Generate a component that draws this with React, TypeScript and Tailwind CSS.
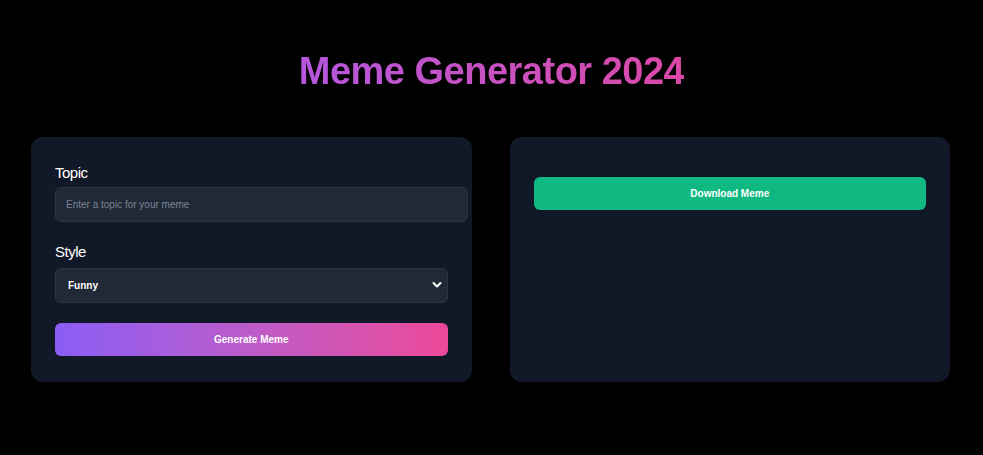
import { useState } from 'react';

export default function App() {
  const [topic, setTopic] = useState('');
  const [style, setStyle] = useState('funny');

  return (
    <div className="min-h-screen w-full bg-black font-['Liberation_Sans',Arial,sans-serif] text-white">
      <div className="flex justify-center pt-[49px] pb-[44px]">
        <h1 className="bg-gradient-to-r from-[#b456dc] to-[#db47a6] bg-clip-text text-[38px] font-bold leading-[44px] tracking-[-0.5px] text-transparent">
          Meme Generator 2024
        </h1>
      </div>

      <div className="grid grid-cols-2 gap-[38px] pl-[31px] pr-[33px]">
        <div className="h-[245px] rounded-xl bg-[#111827] px-6 pt-[24px]">
          <label className="block text-[15px] font-medium leading-6 tracking-[-0.5px] text-white">Topic</label>
          <input
            value={topic}
            onChange={e => setTopic(e.target.value)}
            placeholder="Enter a topic for your meme"
            className="mt-[2px] h-[35px] w-[413px] rounded-md border border-[#2b3444] bg-[#1f2937] px-[10px] text-[10px] text-white outline-none placeholder:text-[#7b8494]"
          />
          <label className="mt-[18px] block text-[15px] font-medium leading-6 tracking-[-0.5px] text-white">Style</label>
          <div className="relative mt-[4px]">
            <select
              value={style}
              onChange={e => setStyle(e.target.value)}
              className="h-[35px] w-full appearance-none rounded-md border border-[#2b3444] bg-[#1f2937] px-[12px] text-[10px] font-bold text-white outline-none"
            >
              <option value="funny">Funny</option>
              <option value="sarcastic">Sarcastic</option>
              <option value="wholesome">Wholesome</option>
            </select>
            <svg className="pointer-events-none absolute right-[6px] top-[13px]" width="10" height="8" viewBox="0 0 10 8" fill="none">
              <path d="M1.5 2l3.5 3.5L8.5 2" stroke="white" strokeWidth="2" strokeLinecap="round" strokeLinejoin="round" />
            </svg>
          </div>
          <button className="mt-[20px] h-[33px] w-full rounded-md bg-gradient-to-r from-[#8b5cf6] to-[#ec4899] text-[10px] font-bold text-white">
            Generate Meme
          </button>
        </div>

        <div className="h-[245px] rounded-xl bg-[#111827] px-6 pt-[40px]">
          <button className="h-[33px] w-full rounded-md bg-[#10b981] text-[10px] font-bold text-white">
            Download Meme
          </button>
        </div>
      </div>
    </div>
  );
}
